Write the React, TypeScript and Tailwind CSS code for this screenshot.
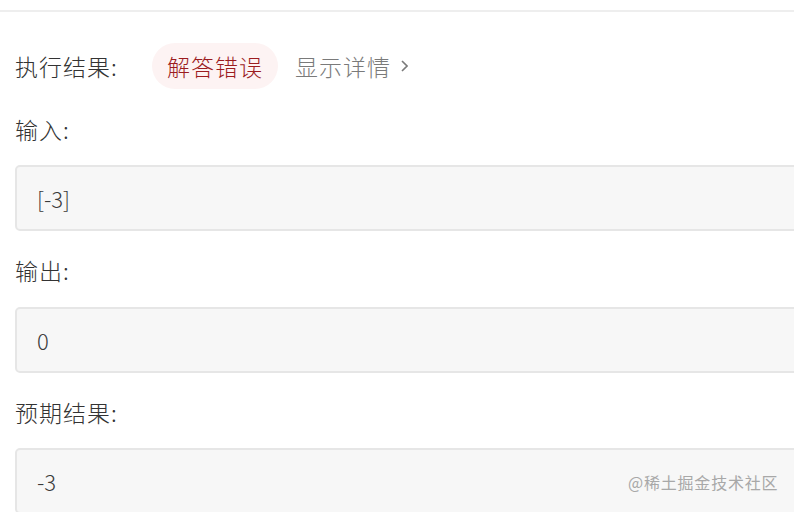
import React from "react";

const font = { fontFamily: '"Noto Sans CJK SC", "Noto Sans", sans-serif' };

function Box({ children }: { children: React.ReactNode }) {
  return (
    <div className="w-[800px] h-[66px] shrink-0 rounded-[5px] border-2 border-[#e6e6e6] bg-[#f7f7f7] flex items-center pl-[20px] text-[22px] font-light text-[#3a3a3a] leading-none">
      {children}
    </div>
  );
}

export default function App() {
  return (
    <div className="w-[794px] h-[512px] overflow-hidden bg-white relative" style={font}>
      <div className="h-[12px] border-b-2 border-[#eeeeee]" />
      <div className="flex flex-col pl-[15px]">
        <div className="flex items-center mt-[31px] h-[46px]">
          <div className="w-[137px] text-[23px] font-light tracking-[1px] text-[#333333] leading-none">执行结果:</div>
          <div className="h-[46px] rounded-full bg-[#fdf3f3] px-[15px] flex items-center text-[23px] font-light tracking-[1px] text-[#9c1c1f] leading-none">
            解答错误
          </div>
          <div className="ml-[17px] text-[23px] font-light tracking-[1px] text-[#7a7a7a] leading-none">显示详情</div>
          <svg className="ml-[10px]" width="7" height="12" viewBox="0 0 7 12">
            <path d="M1 1 L6 6 L1 11" fill="none" stroke="#7a7a7a" strokeWidth="1.6" />
          </svg>
        </div>
        <div className="mt-[24px] h-[32px] flex items-center text-[23px] font-light tracking-[1px] text-[#333333] leading-none">输入:</div>
        <div className="mt-[20px]">
          <Box>[-3]</Box>
        </div>
        <div className="mt-[23px] h-[32px] flex items-center text-[23px] font-light tracking-[1px] text-[#333333] leading-none">输出:</div>
        <div className="mt-[21px]">
          <Box>0</Box>
        </div>
        <div className="mt-[23px] h-[32px] flex items-center text-[23px] font-light tracking-[1px] text-[#333333] leading-none">预期结果:</div>
        <div className="mt-[20px]">
          <Box>-3</Box>
        </div>
      </div>
      <div className="absolute left-[628px] top-[474px] text-[16px] tracking-[0.8px] text-[#a8a8a8] leading-none">@稀土掘金技术社区</div>
    </div>
  );
}
